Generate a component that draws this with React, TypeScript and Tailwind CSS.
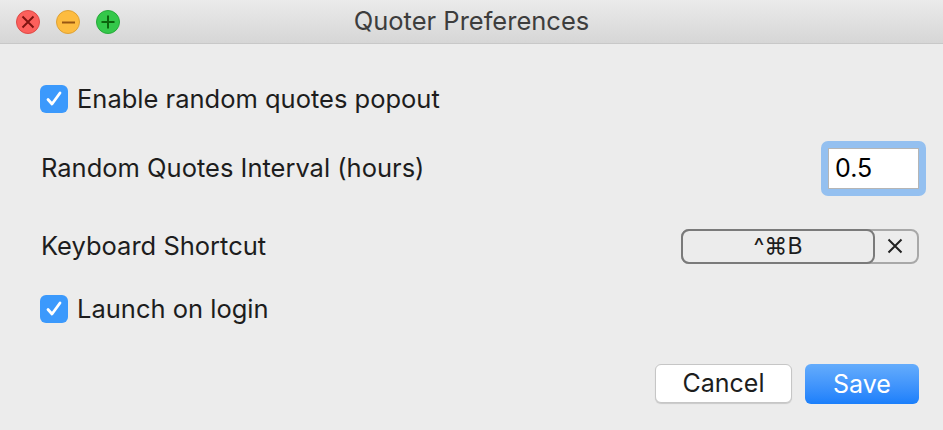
import React from 'react';

function Check() {
  return (
    <span className="flex h-[28px] w-[28px] shrink-0 items-center justify-center rounded-[6px] bg-[#3b99fc]">
      <svg width="20" height="20" viewBox="0 0 20 20" fill="none">
        <path d="M4 10.5l4 4.5 8-11" stroke="white" strokeWidth="2.8" strokeLinecap="round" strokeLinejoin="round" />
      </svg>
    </span>
  );
}

function Light({ color, border, children }: { color: string; border: string; children: React.ReactNode }) {
  return (
    <span className={`flex h-[24px] w-[24px] items-center justify-center rounded-full border ${color} ${border}`}>
      {children}
    </span>
  );
}

export default function App() {
  return (
    <div
      className="flex h-[430px] w-[943px] flex-col overflow-hidden bg-[#ececec] text-[#1d1d1d]"
      style={{ fontFamily: 'Inter, "Liberation Sans", sans-serif' }}
    >
      <div className="relative flex h-[44px] shrink-0 items-center justify-center border-b border-[#c8c8c8] bg-gradient-to-b from-[#ebebeb] to-[#d6d6d6]">
        <div className="absolute left-[16px] top-[10px] flex gap-[16px]">
          <Light color="bg-[#fc605c]" border="border-[#de4a46]">
            <svg width="14" height="14" viewBox="0 0 14 14">
              <path d="M1.5 1.5l11 11M12.5 1.5l-11 11" stroke="#7e1410" strokeWidth="1.9" />
            </svg>
          </Light>
          <Light color="bg-[#fdbc40]" border="border-[#dea236]">
            <svg width="15" height="15" viewBox="0 0 15 15">
              <path d="M1 7.5h13" stroke="#985712" strokeWidth="2" />
            </svg>
          </Light>
          <Light color="bg-[#34c84a]" border="border-[#27a93a]">
            <svg width="16" height="16" viewBox="0 0 16 16">
              <path d="M1.5 8h13M8 1.5v13" stroke="#0b650d" strokeWidth="2" />
            </svg>
          </Light>
        </div>
        <span className="text-[25.5px] text-[#3d3d3d]">Quoter Preferences</span>
      </div>

      <div className="flex flex-1 flex-col pl-[40px] pr-[24px] pt-[41px]">
        <label className="flex h-[28px] items-center gap-[9px]">
          <Check />
          <span className="text-[25.5px]">Enable random quotes popout</span>
        </label>

        <div className="mt-[28px] flex items-center justify-between">
          <span className="pl-[1px] text-[25.5px]">Random Quotes Interval (hours)</span>
          <div className="-mr-[7px] rounded-[7px] bg-[#94c0f0] p-[7px]">
            <div className="flex h-[41px] w-[91px] items-center border border-[#b5b5b5] bg-white px-[6px] text-[25px] text-black">
              0.5
            </div>
          </div>
        </div>

        <div className="mt-[31px] flex items-center justify-between">
          <span className="pl-[1px] text-[25.5px]">Keyboard Shortcut</span>
          <div className="flex h-[35px] w-[238px] rounded-[8px] border-2 border-[#a8a8a8]">
            <div className="-m-[2px] flex w-[194px] items-center justify-center rounded-[8px] border-2 border-[#7a7a7a] text-[23px]">
              ^⌘B
            </div>
            <div className="flex flex-1 items-center justify-center">
              <svg width="18" height="18" viewBox="0 0 18 18">
                <path d="M2.5 2.5l13 13M15.5 2.5l-13 13" stroke="#222" strokeWidth="2" />
              </svg>
            </div>
          </div>
        </div>

        <label className="mt-[30px] flex h-[28px] items-center gap-[9px]">
          <Check />
          <span className="text-[25.5px]">Launch on login</span>
        </label>

        <div className="mt-[41px] flex justify-end gap-[13px]">
          <button className="h-[39px] w-[137px] rounded-[6px] border border-[#c6c6c6] bg-white text-[25px] text-[#1d1d1d] shadow-[0_1px_1px_rgba(0,0,0,0.15)]">
            Cancel
          </button>
          <button className="h-[40px] w-[114px] rounded-[6px] bg-gradient-to-b from-[#64acfc] to-[#1a7ffb] text-[25px] text-white">
            Save
          </button>
        </div>
      </div>
    </div>
  );
}
